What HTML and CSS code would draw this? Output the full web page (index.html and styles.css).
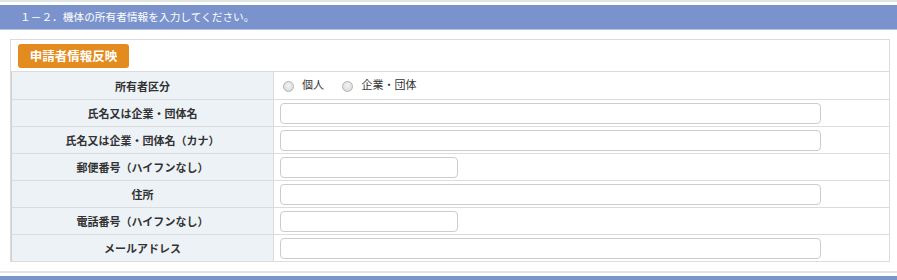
FILE: index.html
```html
<!DOCTYPE html>
<html lang="ja">
<head>
<meta charset="utf-8">
<title>所有者情報</title>
<link rel="stylesheet" href="styles.css">
</head>
<body>
<section class="section">
  <div class="topline"></div>
  <h2 class="sec-title">１－２．機体の所有者情報を入力してください。</h2>
  <div class="card">
    <div class="card-tools">
      <button class="btn-reflect" type="button">申請者情報反映</button>
    </div>
    <table class="form-table">
      <tr class="row-first">
        <th>所有者区分</th>
        <td>
          <label class="radio"><span class="radio-dot"></span>個人</label>
          <label class="radio"><span class="radio-dot"></span>企業・団体</label>
        </td>
      </tr>
      <tr>
        <th>氏名又は企業・団体名</th>
        <td><span class="field field-long"></span></td>
      </tr>
      <tr>
        <th>氏名又は企業・団体名（カナ）</th>
        <td><span class="field field-long"></span></td>
      </tr>
      <tr>
        <th>郵便番号（ハイフンなし）</th>
        <td><span class="field field-short"></span></td>
      </tr>
      <tr>
        <th>住所</th>
        <td><span class="field field-long"></span></td>
      </tr>
      <tr>
        <th>電話番号（ハイフンなし）</th>
        <td><span class="field field-short"></span></td>
      </tr>
      <tr>
        <th>メールアドレス</th>
        <td><span class="field field-long"></span></td>
      </tr>
    </table>
  </div>
</section>
<section class="section">
  <div class="topline"></div>
  <h2 class="sec-title"></h2>
</section>
</body>
</html>
```
FILE: styles.css
```css
html, body {
  margin: 0;
  padding: 0;
  background: #fff;
}
body {
  font-family: "Noto Sans CJK JP", "Noto Sans", sans-serif;
  color: #333;
  font-size: 11px;
  width: 897px;
  height: 280px;
  overflow: hidden;
}
.section {
  display: block;
}
.topline {
  height: 2px;
  background: #dfe4e4;
  margin-bottom: 3px;
}
.sec-title {
  margin: 0;
  height: 24px;
  line-height: 23px;
  background: #7b93cd;
  color: #fff;
  font-size: 10.7px;
  font-weight: normal;
  padding-left: 20px;
  border-bottom: 1px solid #b3c1e3;
}
.card {
  margin: 9px 7px 9px 10px;
  border: 1px solid #dcdcdc;
  border-bottom: none;
}
.card-tools {
  padding: 4px 7px 3px;
  display: flex;
}
.btn-reflect {
  height: 24px;
  width: 111px;
  padding: 0;
  border: none;
  border-radius: 3px;
  background: #e38b1e;
  color: #fff;
  font-family: "Noto Sans CJK JP", sans-serif;
  font-size: 12.5px;
  font-weight: bold;
  line-height: 24px;
}
.form-table {
  width: 100%;
  border-collapse: collapse;
  border-left: 1px solid #d0d0d0;
  border-bottom: 1px solid #dcdcdc;
}
.form-table th, .form-table td {
  border-top: 1px solid #dcdcdc;
  height: 26px;
  padding: 0;
}
.form-table tr.row-first th, .form-table tr.row-first td {
  height: 27px;
}
.form-table th {
  width: 261px;
  background: #edf2f7;
  border-right: 1px solid #dcdcdc;
  font-weight: bold;
  font-size: 11px;
  text-align: center;
  color: #333;
}
.form-table td {
  padding-left: 6px;
  vertical-align: middle;
}
.row-first td {
  padding-left: 9px;
}
.radio {
  display: inline-flex;
  align-items: center;
  margin-right: 16px;
  font-size: 11px;
  position: relative;
  top: -1px;
}
.radio-dot {
  width: 9px;
  height: 9px;
  border-radius: 50%;
  border: 1px solid #b5b5b5;
  background: radial-gradient(circle at 50% 40%, #f4f4f4 0%, #dedede 70%, #cfcfcf 100%);
  margin-right: 8px;
  position: relative;
  top: 2px;
}
.field {
  display: block;
  height: 19px;
  border: 1px solid #cccccc;
  border-radius: 4px;
  background: #fff;
  margin-top: 1px;
}
.field-long {
  width: 539px;
}
.field-short {
  width: 176px;
}
```
